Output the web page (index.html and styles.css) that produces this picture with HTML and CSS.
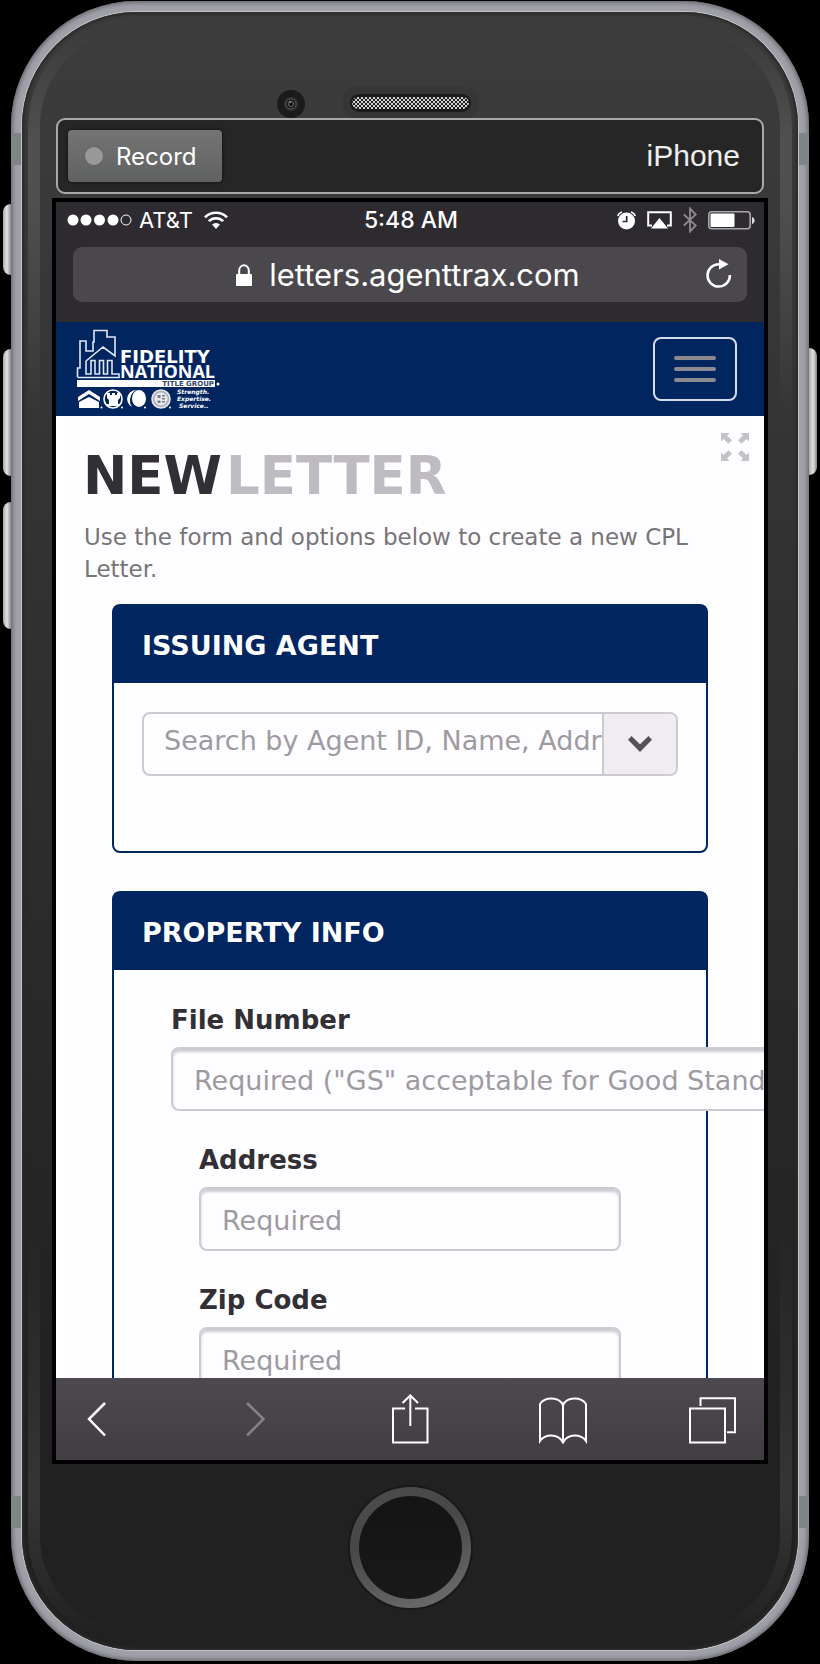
FILE: index.html
```html
<!DOCTYPE html>
<html lang="en">
<head>
<meta charset="utf-8">
<meta name="viewport" content="width=device-width, initial-scale=1">
<title>New Letter</title>
<link rel="stylesheet" href="styles.css">
</head>
<body>
<div class="device">
  <span class="key key-mute"></span>
  <span class="key key-up"></span>
  <span class="key key-down"></span>
  <span class="key key-power"></span>
  <span class="antenna antenna-top"></span>
  <span class="antenna antenna-bottom"></span>
  <div class="face">
    <div class="sensors">
      <svg class="camera" width="28" height="28" viewBox="0 0 28 28" aria-hidden="true">
        <circle cx="14" cy="14" r="14" fill="#1b1b1b"/>
        <circle cx="14" cy="14" r="7" fill="#303030"/>
        <circle cx="14" cy="14" r="5" fill="#151515" stroke="#555" stroke-width="1"/>
        <circle cx="14" cy="14" r="2.500" fill="#050505" stroke="#777" stroke-width="1"/>
        <circle cx="13" cy="12" r="1" fill="#999"/>
      </svg>
      <svg class="speaker" width="135" height="31" viewBox="0 0 135 31" aria-hidden="true">
        <defs>
          <pattern id="mesh" width="4" height="4" patternUnits="userSpaceOnUse">
            <rect width="4" height="4" fill="#222"/>
            <rect width="2" height="2" fill="#d0d0d0"/>
            <rect x="2" y="2" width="2" height="2" fill="#d0d0d0"/>
          </pattern>
        </defs>
        <rect width="135" height="31" rx="12" fill="#363636"/>
        <rect x="7" y="7" width="121" height="18" rx="9" fill="#1c1c1c"/>
        <rect x="9" y="10" width="117" height="12" rx="6" fill="url(#mesh)"/>
      </svg>
    </div>

    <div class="recorder">
      <button class="record" type="button"><span class="record-dot"></span>Record</button>
      <span class="device-name">iPhone</span>
    </div>

    <div class="screen">
      <div class="status">
        <div class="status-side">
          <svg width="65" height="14" viewBox="0 0 65 14" aria-hidden="true">
            <g fill="#fff"><circle cx="6" cy="7" r="5.500"/><circle cx="19" cy="7" r="5.500"/><circle cx="32.500" cy="7" r="5.500"/><circle cx="46" cy="7" r="5.500"/></g>
            <circle cx="59" cy="7" r="5" fill="none" stroke="#fff"/>
          </svg>
          <span class="carrier">AT&amp;T</span>
          <svg width="24" height="18" viewBox="0 0 24 18" fill="none" stroke="#fff" stroke-width="2.600" aria-hidden="true">
            <path d="M1 6.300a15.500 15.500 0 0 1 22 0M4.800 10.200a10.200 10.200 0 0 1 14.400 0"/>
            <path d="M12 18l-4-4.400a5.700 5.700 0 0 1 8 0z" fill="#fff" stroke="none"/>
          </svg>
        </div>
        <span class="clock">5:48 AM</span>
        <div class="status-side status-right">
          <svg width="19" height="19" viewBox="0 0 19 19" aria-hidden="true">
            <circle cx="9.500" cy="10" r="8.500" fill="#fff"/>
            <path d="M.8 5A6 6 0 0 1 5 .9M14 .9A6 6 0 0 1 18.200 5" fill="none" stroke="#fff" stroke-width="1.600"/>
            <path d="M9.700 5v5.500H5.500" fill="none" stroke="#2d2a30" stroke-width="1.700"/>
          </svg>
          <svg width="25" height="18" viewBox="0 0 25 18" aria-hidden="true">
            <path d="M5 14.500H1.200V1.200h22.600v13.300H20" fill="none" stroke="#fff" stroke-width="2"/>
            <path d="M12.500 7l8.500 10.500H4z" fill="#fff"/>
          </svg>
          <svg width="14" height="26" viewBox="0 0 14 26" fill="none" stroke="#8d8a90" stroke-width="1.800" aria-hidden="true">
            <path d="M.8 7.500l12 11L7 24.500v-23l5.800 6-12 11"/>
          </svg>
          <svg width="47" height="19" viewBox="0 0 47 19" aria-hidden="true">
            <rect x=".8" y=".8" width="41.400" height="17" rx="3" fill="none" stroke="#aaa7ac" stroke-width="1.600"/>
            <rect x="2.500" y="2.500" width="24" height="13.600" rx="1" fill="#fff"/>
            <path d="M44 6c3.500 1 3.500 6 0 7z" fill="#ddd"/>
          </svg>
        </div>
      </div>
      <div class="address">
        <svg width="16" height="22" viewBox="0 0 16 22" aria-hidden="true">
          <rect y="10" width="16" height="12" rx="1" fill="#fff"/>
          <path d="M3.200 11V6.500a4.800 5.200 0 0 1 9.600 0V11" fill="none" stroke="#fff" stroke-width="2"/>
        </svg>
        <span class="url">letters.agenttrax.com</span>
        <button class="reload" type="button" aria-label="Reload">
          <svg width="26" height="30" viewBox="0 0 26 30" aria-hidden="true">
            <path d="M23.900 17A11.200 11.200 0 1 1 13 6.200h3" fill="none" stroke="#fff" stroke-width="2.500"/>
            <path d="M13 1l9.500 5.200L13 11.500z" fill="#fff"/>
          </svg>
        </button>
      </div>

      <header class="navbar">
        <a class="brand" href="#" aria-label="Fidelity National Title Group">
          <svg width="145" height="80" viewBox="0 0 145 80" aria-hidden="true">
            <path d="M1.500 48V39H4V12h6v10h7V13h1V1.500h13V8h8v19l-12-9-17 14M10 32V45h5V31.500h4V45h4.500V31.500h4V45h4V31.500h4.500V45h7v3.500H1.500" fill="none" stroke="#dfe7f5" stroke-width="1.600"/>
            <text class="brand-name"><tspan x="44" y="34" class="brand-wide">FIDELITY</tspan><tspan x="44" y="49">NATIONAL</tspan></text>
            <rect x="1" y="51" width="138" height="7" fill="#fff"/>
            <text x="138" y="57" text-anchor="end" class="brand-group">TITLE GROUP</text>
            <circle cx="142" cy="55" r="1.500" fill="#fff"/>
            <path d="M2 68l11-7 11 7v4l-11-7-11 7zM3 73l10-5 10 5v6H3z" fill="#fff"/>
            <circle cx="37" cy="70" r="9" fill="none" stroke="#fff" stroke-width="1.600"/>
            <path d="M31 64h3v2h2v-2h3v2h2v-2h3v5l-2 2v4h2v2H31v-2h2v-4l-2-2z" fill="#fff"/>
            <path d="M60 61a9 9 0 0 0-4 17 12 12 0 0 1 4-17z" fill="#fff"/>
            <ellipse cx="63" cy="69.500" rx="7" ry="8.500" fill="#fff"/>
            <circle cx="85" cy="70" r="9" fill="#aab0bd" stroke="#e8e8ea" stroke-width="1.600"/>
            <circle cx="85" cy="70" r="6.500" fill="#e9e9ec"/>
            <path d="M81.500 66h3v3h-3zM86 66h3v1.500h-3zM86 69h3v1.500h-3zM81.500 71.500h3v2.500h-3zM86 72h3v1.500h-3z" fill="#777c88"/>
            <g fill="#fff"><circle cx="25.500" cy="78.500" r="1"/><circle cx="46" cy="78.500" r="1"/><circle cx="69" cy="78.500" r="1"/><circle cx="94" cy="78.500" r="1"/></g>
            <text class="brand-motto"><tspan x="101" y="65">Strength.</tspan><tspan x="101" y="72">Expertise.</tspan><tspan x="103" y="79">Service..</tspan></text>
          </svg>
        </a>
        <button class="menu" type="button" aria-label="Menu">
          <span></span><span></span><span></span>
        </button>
      </header>

      <main class="page">
        <div class="title-row">
          <h1><span>NEW</span><span class="light">LETTER</span></h1>
          <button class="expand" type="button" aria-label="Full screen">
            <svg width="28" height="28" viewBox="0 0 28 28" fill="#c5c2c7" aria-hidden="true">
              <path d="M0 0h8.500L6 2.600l5 4.600-3.600 3.600-5-4.800L0 8.500z"/>
              <path d="M28 0h-8.500L22 2.600l-5 4.600 3.600 3.600 5-4.800L28 8.500z"/>
              <path d="M0 28h8.500L6 25.400l5-4.600-3.600-3.600-5 4.800L0 19.500z"/>
              <path d="M28 28h-8.500L22 25.400l-5-4.600 3.600-3.600 5 4.800L28 19.500z"/>
            </svg>
          </button>
        </div>
        <p class="intro">Use the form and options below to create a new CPL Letter.</p>

        <section class="panel">
          <h2>ISSUING AGENT</h2>
          <div class="agent">
            <div class="combo">
              <input type="text" aria-label="Issuing agent" placeholder="Search by Agent ID, Name, Address">
              <button type="button" aria-label="Show agents">
                <svg width="24" height="16" viewBox="0 0 24 16" aria-hidden="true">
                  <path d="M3.500 0L12 8.200 20.500 0 24 3.800 12 16 0 3.800z" fill="#565358"/>
                </svg>
              </button>
            </div>
          </div>
        </section>

        <section class="panel">
          <h2>PROPERTY INFO</h2>
          <form class="property">
            <div class="field wide">
              <label for="file">File Number</label>
              <input id="file" type="text" placeholder='Required ("GS" acceptable for Good Standing)'>
            </div>
            <div class="field inset">
              <label for="street">Address</label>
              <input id="street" type="text" placeholder="Required">
            </div>
            <div class="field inset">
              <label for="zip">Zip Code</label>
              <input id="zip" type="text" placeholder="Required">
            </div>
          </form>
        </section>
      </main>

      <nav class="toolbar" aria-label="Browser">
        <button type="button" aria-label="Back">
          <svg width="20" height="50" viewBox="0 0 20 50"><path d="M18 9L2 25l16 16.500"/></svg>
        </button>
        <button type="button" class="off" aria-label="Forward">
          <svg width="20" height="50" viewBox="0 0 20 50"><path d="M1 9l16.500 16L1 41.500"/></svg>
        </button>
        <button type="button" aria-label="Share">
          <svg width="37" height="50" viewBox="0 0 37 50"><path class="thin" d="M13 14.500H1v34h34.500v-34H23M18.300 32V1.500M10.500 9L18.300 1.500 26 9"/></svg>
        </button>
        <button type="button" aria-label="Bookmarks">
          <svg width="48" height="50" viewBox="0 0 48 50"><path class="thin" d="M24 48.500V11C20 2.500 6 2.500 1 10v37c5-7 18-8 23 1.500C29 39 42 40 47 47V10C42 2.500 28 2.500 24 11"/></svg>
        </button>
        <button type="button" aria-label="Tabs">
          <svg width="47" height="50" viewBox="0 0 47 50"><path class="thin" d="M1 14.500h35v34H1zM11.500 12V4.200H46v34h-8"/></svg>
        </button>
      </nav>
    </div>

    <button class="home" type="button" aria-label="Home"></button>
  </div>
</div>
</body>
</html>
```

FILE: styles.css
```css
* {
  box-sizing: border-box;
}

body {
  margin: 0;
  background: #000;
  font-family: "DejaVu Sans", Verdana, sans-serif;
}

button {
  margin: 0;
  padding: 0;
  border: 0;
  background: none;
  color: inherit;
  font: inherit;
}

svg {
  display: block;
  flex: none;
}

/* Device body */
.device {
  position: relative;
  display: flex;
  height: calc(100vh - 4px);
  margin: 1px 11px 3px;
  padding: 11px;
  border-radius: 125px;
  background: #9fa0a8;
  box-shadow: inset 0 0 5px 1px #5a5a60;
}

.key {
  position: absolute;
  left: -8px;
  width: 8px;
  height: 127px;
  border-radius: 8px 0 0 8px;
  background: linear-gradient(to right, #aaa, #e2e2e2 50%, #888);
}

.key-mute {
  top: 203px;
  height: 71px;
}

.key-up {
  top: 348px;
}

.key-down {
  top: 501px;
}

.key-power {
  top: 347px;
  left: auto;
  right: -8px;
  border-radius: 0 8px 8px 0;
}

.antenna {
  position: absolute;
  left: 0;
  right: 0;
  height: 32px;
  background: #7f8586;
}

.antenna-top {
  top: 132px;
}

.antenna-bottom {
  bottom: 133px;
}

.face {
  position: relative;
  flex: 1;
  min-width: 0;
  display: flex;
  flex-direction: column;
  padding: 0 30px;
  border-radius: 114px;
  background: linear-gradient(#3c3c3c, #383838 15%, #212121 85%, #212121);
  box-shadow: 0 0 0 1px #c6c6ca, inset 0 0 3px 2px #2a2a2a;
}

.face::before {
  content: "";
  position: absolute;
  inset: 6px;
  border: 12px solid #505050;
  border-radius: 108px;
  -webkit-mask-image: linear-gradient(transparent 10px, #000 120px, #000 180px, transparent 400px, transparent 1200px, rgba(0, 0, 0, .45) 1480px, transparent 1620px);
  mask-image: linear-gradient(transparent 10px, #000 120px, #000 180px, transparent 400px, transparent 1200px, rgba(0, 0, 0, .45) 1480px, transparent 1620px);
}

.sensors {
  display: grid;
  grid-template-columns: 1fr auto 1fr;
  align-items: end;
  gap: 38px;
  height: 106px;
}

.camera {
  justify-self: end;
}

.recorder {
  display: flex;
  align-items: center;
  justify-content: space-between;
  height: 76px;
  margin: 0 4px 4px;
  padding: 0 22px 0 10px;
  border: 2px solid #a9a9a9;
  border-radius: 9px;
  background: #262626;
  color: #eee;
}

.record {
  display: flex;
  align-items: center;
  gap: 13px;
  height: 52px;
  padding: 0 25px 0 17px;
  border-radius: 4px;
  background: linear-gradient(#747474, #606261);
  box-shadow: 0 0 3px 1px #181818;
  color: #fff;
  font: 24px Inter, sans-serif;
}

.record-dot {
  width: 18px;
  height: 18px;
  border-radius: 50%;
  background: #999;
  box-shadow: 0 0 2px 1px #666;
}

.device-name {
  font: 30px "Liberation Sans", Arial, sans-serif;
}

/* Screen */
.screen {
  position: relative;
  flex: 1;
  min-height: 0;
  display: flex;
  flex-direction: column;
  overflow: hidden;
  border: 4px solid #000;
  background: #2d2a30;
}

.status {
  display: grid;
  grid-template-columns: 1fr auto 1fr;
  align-items: center;
  height: 36px;
  padding: 0 9px 0 11px;
  color: #fff;
  font: 22px/36px Inter, sans-serif;
}

.status-side {
  display: flex;
  align-items: center;
  gap: 11px;
}

.carrier {
  margin-left: -4px;
}

.status-right {
  justify-content: flex-end;
}

.clock {
  font-size: 23px;
  font-weight: 500;
}

.address {
  position: relative;
  display: flex;
  align-items: center;
  justify-content: center;
  gap: 17px;
  height: 55px;
  margin: 9px 17px 20px;
  padding-right: 4px;
  border-radius: 9px;
  background: #4b484d;
  color: #fff;
  font: 31px Inter, sans-serif;
}

.reload {
  position: absolute;
  right: 15px;
  top: 11px;
}

.navbar {
  display: flex;
  align-items: center;
  justify-content: space-between;
  height: 94px;
  padding: 0 27px 0 20px;
  background: #00255f;
}

.brand-name {
  fill: #fff;
  font: bold 18px "Open Sans", sans-serif;
}

.brand-wide {
  font-family: "DejaVu Sans", sans-serif;
}

.brand-group {
  fill: #33456d;
  font: bold 7px "DejaVu Sans", sans-serif;
}

.brand-motto {
  fill: #fff;
  font: italic bold 6px "DejaVu Sans", sans-serif;
}

.menu {
  display: flex;
  flex-direction: column;
  align-items: center;
  justify-content: center;
  gap: 7px;
  width: 84px;
  height: 64px;
  border: 2px solid #d5ddea;
  border-radius: 8px;
}

.menu span {
  width: 42px;
  height: 4px;
  border-radius: 2px;
  background: #8a8a90;
}

/* Page */
.page {
  flex: 1;
  min-height: 0;
  overflow: hidden;
  padding: 17px 0 0;
  background: #fefdff;
  color: #323035;
}

.title-row {
  display: flex;
  align-items: flex-start;
  justify-content: space-between;
  padding: 0 15px 0 27px;
}

h1 {
  margin: 11px 0 13px;
  font-size: 53px;
  line-height: 64px;
}

.light {
  margin-left: 4px;
  color: #bebbc1;
}

.intro {
  margin: 0 28px 19px;
  color: #77747a;
  font-size: 23px;
  line-height: 32px;
}

.panel {
  margin: 0 56px 38px;
  border: 2px solid #00255f;
  border-radius: 8px;
}

h2 {
  margin: 0;
  padding: 2px 28px 0;
  background: #00255f;
  color: #fff;
  font-size: 27px;
  line-height: 75px;
}

.agent {
  padding: 29px 28px 75px;
}

.combo {
  display: flex;
  height: 64px;
  border: 2px solid #cecbd0;
  border-radius: 8px;
  overflow: hidden;
}

.combo input {
  flex: 1;
  min-width: 0;
  padding: 0 0 7px 20px;
  border: 0;
  background: none;
  font: 27px "DejaVu Sans", Verdana, sans-serif;
}

.combo button {
  display: flex;
  align-items: center;
  justify-content: center;
  width: 74px;
  border-left: 2px solid #cecbd0;
  background: #efedf0;
}

input::placeholder {
  color: #9e9ba0;
  opacity: 1;
}

.property {
  padding: 32px 57px 0;
}

.field {
  margin-bottom: 31px;
}

.field label {
  display: block;
  padding-bottom: 9px;
  font-size: 26px;
  font-weight: bold;
  line-height: 36px;
}

.field input {
  display: block;
  width: 100%;
  height: 64px;
  padding: 2px 21px 0;
  border: 2px solid #cecbd0;
  border-radius: 8px;
  background: #fefdff;
  box-shadow: inset 0 3px 3px #cecbd0;
  font: 27px "DejaVu Sans", Verdana, sans-serif;
}

.wide {
  margin-right: -180px;
}

.inset {
  padding: 0 28px;
}

.toolbar {
  display: grid;
  grid-template-columns: 159fr 145fr 147fr 150fr auto;
  align-items: center;
  justify-items: start;
  height: 82px;
  padding: 0 28px 0 31px;
  background: linear-gradient(#4d494e, #413d42);
}

.toolbar path {
  fill: none;
  stroke: #fff;
  stroke-width: 2.500;
}

.toolbar .thin {
  stroke-width: 2;
}

.toolbar .off path {
  stroke: #858286;
}

.home {
  align-self: center;
  width: 121px;
  height: 121px;
  margin: 23px 0 42px;
  border-radius: 50%;
  background: linear-gradient(#141414, #191919) padding-box, linear-gradient(160deg, #4c4c4c, #484848 40%, #707070) border-box;
  border: 9px solid transparent;
  box-shadow: 0 0 0 2px #191919;
}
```
